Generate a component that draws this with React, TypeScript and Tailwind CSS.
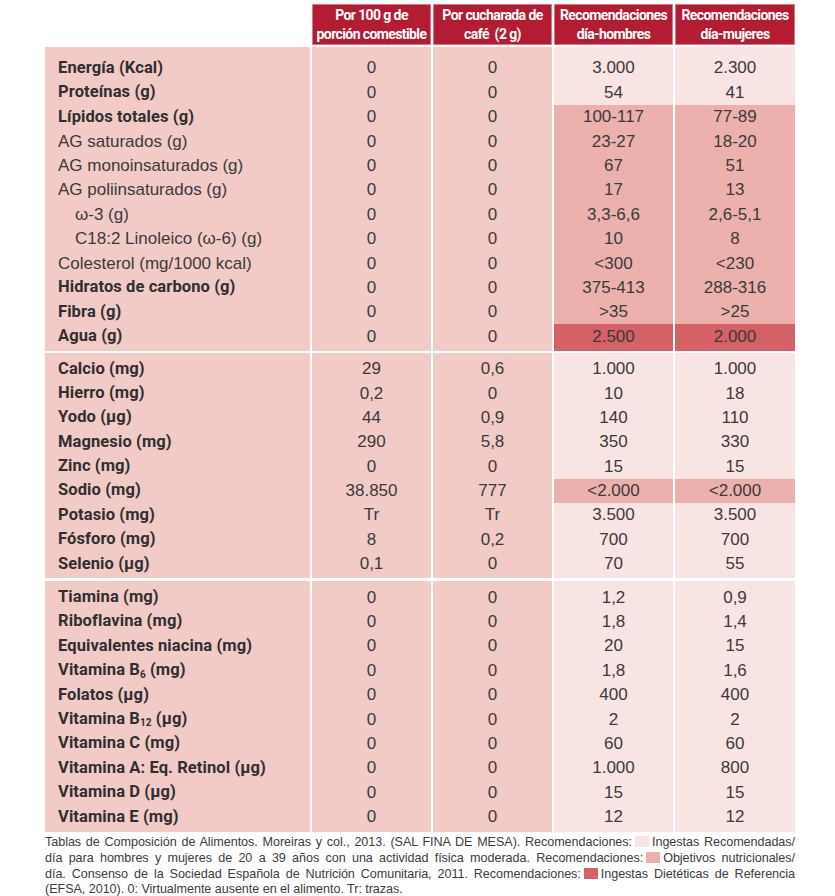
import React from "react";

type Tone = "light" | "med" | "dark";

interface Row {
  label: React.ReactNode;
  bold?: boolean;
  indent?: boolean;
  per100: string;
  perSpoon: string;
  men: string;
  women: string;
  tone?: Tone;
}

const toneBg: Record<Tone, string> = {
  light: "bg-[#f8e4e2]",
  med: "bg-[#ecb1ad]",
  dark: "bg-[#d46165]",
};

const cols = "grid grid-cols-[265px_119px_119px_119px_120px] gap-x-[2px]";

const lipids: Row[] = [
  { label: "Energía (Kcal)", bold: true, per100: "0", perSpoon: "0", men: "3.000", women: "2.300" },
  { label: "Proteínas (g)", bold: true, per100: "0", perSpoon: "0", men: "54", women: "41" },
  { label: "Lípidos totales (g)", bold: true, per100: "0", perSpoon: "0", men: "100-117", women: "77-89", tone: "med" },
  { label: "AG saturados (g)", per100: "0", perSpoon: "0", men: "23-27", women: "18-20", tone: "med" },
  { label: "AG monoinsaturados (g)", per100: "0", perSpoon: "0", men: "67", women: "51", tone: "med" },
  { label: "AG poliinsaturados (g)", per100: "0", perSpoon: "0", men: "17", women: "13", tone: "med" },
  { label: "ω-3 (g)", indent: true, per100: "0", perSpoon: "0", men: "3,3-6,6", women: "2,6-5,1", tone: "med" },
  { label: "C18:2 Linoleico (ω-6) (g)", indent: true, per100: "0", perSpoon: "0", men: "10", women: "8", tone: "med" },
  { label: "Colesterol (mg/1000 kcal)", per100: "0", perSpoon: "0", men: "<300", women: "<230", tone: "med" },
  { label: "Hidratos de carbono (g)", bold: true, per100: "0", perSpoon: "0", men: "375-413", women: "288-316", tone: "med" },
  { label: "Fibra (g)", bold: true, per100: "0", perSpoon: "0", men: ">35", women: ">25", tone: "med" },
  { label: "Agua (g)", bold: true, per100: "0", perSpoon: "0", men: "2.500", women: "2.000", tone: "dark" },
];

const minerals: Row[] = [
  { label: "Calcio (mg)", bold: true, per100: "29", perSpoon: "0,6", men: "1.000", women: "1.000" },
  { label: "Hierro (mg)", bold: true, per100: "0,2", perSpoon: "0", men: "10", women: "18" },
  { label: "Yodo (µg)", bold: true, per100: "44", perSpoon: "0,9", men: "140", women: "110" },
  { label: "Magnesio (mg)", bold: true, per100: "290", perSpoon: "5,8", men: "350", women: "330" },
  { label: "Zinc (mg)", bold: true, per100: "0", perSpoon: "0", men: "15", women: "15" },
  { label: "Sodio (mg)", bold: true, per100: "38.850", perSpoon: "777", men: "<2.000", women: "<2.000", tone: "med" },
  { label: "Potasio (mg)", bold: true, per100: "Tr", perSpoon: "Tr", men: "3.500", women: "3.500" },
  { label: "Fósforo (mg)", bold: true, per100: "8", perSpoon: "0,2", men: "700", women: "700" },
  { label: "Selenio (µg)", bold: true, per100: "0,1", perSpoon: "0", men: "70", women: "55" },
];

const sub = (n: string) => <sub className="text-[10px] leading-none">{n}</sub>;

const vitamins: Row[] = [
  { label: "Tiamina (mg)", bold: true, per100: "0", perSpoon: "0", men: "1,2", women: "0,9" },
  { label: "Riboflavina (mg)", bold: true, per100: "0", perSpoon: "0", men: "1,8", women: "1,4" },
  { label: "Equivalentes niacina (mg)", bold: true, per100: "0", perSpoon: "0", men: "20", women: "15" },
  { label: <>Vitamina B{sub("6")} (mg)</>, bold: true, per100: "0", perSpoon: "0", men: "1,8", women: "1,6" },
  { label: "Folatos (µg)", bold: true, per100: "0", perSpoon: "0", men: "400", women: "400" },
  { label: <>Vitamina B{sub("12")} (µg)</>, bold: true, per100: "0", perSpoon: "0", men: "2", women: "2" },
  { label: "Vitamina C (mg)", bold: true, per100: "0", perSpoon: "0", men: "60", women: "60" },
  { label: "Vitamina A: Eq. Retinol (µg)", bold: true, per100: "0", perSpoon: "0", men: "1.000", women: "800" },
  { label: "Vitamina D (µg)", bold: true, per100: "0", perSpoon: "0", men: "15", women: "15" },
  { label: "Vitamina E (mg)", bold: true, per100: "0", perSpoon: "0", men: "12", women: "12" },
];

const Section = ({
  rows,
  top,
  bottom,
  className = "",
}: {
  rows: Row[];
  top: string;
  bottom: string;
  className?: string;
}) => (
  <div className={`${cols} ${className}`}>
    {rows.map((row, i) => {
      const pad = `${i === 0 ? top : ""} ${i === rows.length - 1 ? bottom : ""}`;
      const cell = `box-content h-[24.4px] flex items-center ${pad}`;
      const tone = toneBg[row.tone ?? "light"];
      return (
        <React.Fragment key={i}>
          <div
            className={`${cell} bg-[#f2cbc7] ${row.indent ? "pl-[30px]" : "pl-[13px]"} ${
              row.bold
                ? "font-bold text-[16.5px] tracking-[0.1px] text-[#2f2f31] [font-family:Roboto,sans-serif]"
                : "text-[#3a3a3c]"
            }`}
          >
            <span>{row.label}</span>
          </div>
          <div className={`${cell} justify-center bg-[#f2cbc7]`}>{row.per100}</div>
          <div className={`${cell} justify-center bg-[#f2cbc7]`}>{row.perSpoon}</div>
          <div className={`${cell} justify-center ${tone}`}>{row.men}</div>
          <div className={`${cell} justify-center ${tone}`}>{row.women}</div>
        </React.Fragment>
      );
    })}
  </div>
);

const Head = ({ a, b }: { a: string; b: string }) => (
  <div className="flex h-[41px] flex-col items-center justify-center whitespace-pre border border-[#d27a86] bg-[#b41c33] text-[14px] leading-[19px] font-bold tracking-[-0.6px] text-white [font-family:Roboto,sans-serif]">
    <span>{a}</span>
    <span>{b}</span>
  </div>
);

const Swatch = ({ color }: { color: string }) => (
  <span className={`mx-[3px] inline-block h-[11px] w-[14px] align-[-1px] ${color}`} />
);

export default function App() {
  return (
    <div className="h-[896px] w-[835px] overflow-hidden bg-white pt-[4px] pl-[45px] text-[17px] text-[#3a3a3c] [font-family:'Liberation_Sans',Arial,sans-serif]">
      <div className={cols}>
        <div />
        <Head a="Por 100 g de" b="porción comestible" />
        <Head a="Por cucharada de" b="café  (2 g)" />
        <Head a="Recomendaciones" b="día-hombres" />
        <Head a="Recomendaciones" b="día-mujeres" />
      </div>

      <Section rows={lipids} top="pt-[9px]" bottom="pb-[2px]" className="mt-[2px]" />
      <Section rows={minerals} top="pt-[4px]" bottom="pb-[2px]" className="mt-[2px]" />
      <Section rows={vitamins} top="pt-[4px]" bottom="pb-[3px]" className="mt-[3px]" />

      <div className="mt-[3px] w-[750px] text-[12.6px] tracking-[-0.05px] leading-[15.7px] text-[#3c3c3e]">
        <p className="whitespace-nowrap text-justify [text-align-last:justify]">
          Tablas de Composición de Alimentos. Moreiras y col., 2013. (SAL FINA DE MESA). Recomendaciones:
          <Swatch color="bg-[#f8e4e2]" />Ingestas Recomendadas/
        </p>
        <p className="whitespace-nowrap text-justify [text-align-last:justify]">
          día para hombres y mujeres de 20 a 39 años con una actividad física moderada. Recomendaciones:
          <Swatch color="bg-[#ecb1ad]" />Objetivos nutricionales/
        </p>
        <p className="whitespace-nowrap text-justify [text-align-last:justify]">
          día. Consenso de la Sociedad Española de Nutrición Comunitaria, 2011. Recomendaciones:
          <Swatch color="bg-[#d46165]" />Ingestas Dietéticas de Referencia
        </p>
        <p className="whitespace-nowrap">(EFSA, 2010). 0: Virtualmente ausente en el alimento. Tr: trazas.</p>
      </div>
    </div>
  );
}
